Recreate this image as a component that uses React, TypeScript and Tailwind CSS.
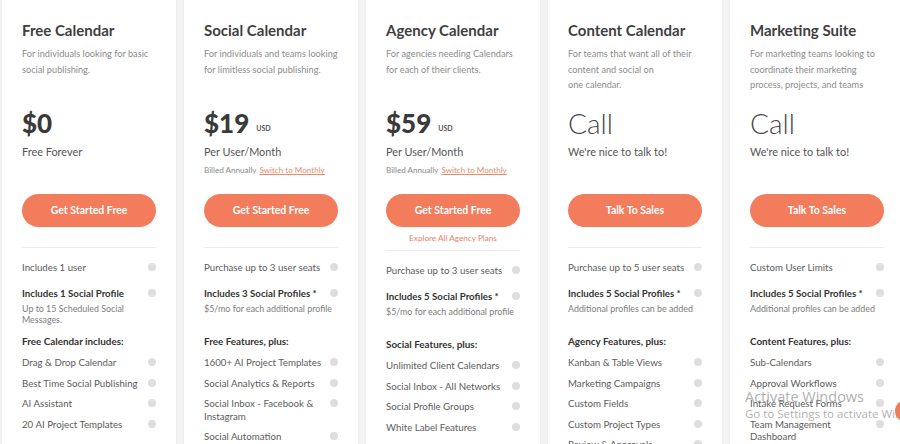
import React from "react";

type Plan = {
  title: string;
  desc: string[];
  price: string;
  isCall?: boolean;
  usd?: boolean;
  sub: string;
  billed?: boolean;
  button: string;
  explore?: boolean;
  first: string;
  profiles: string;
  profilesSub: string;
  header: string;
  features: string[];
};

const plans: Plan[] = [
  {
    title: "Free Calendar",
    desc: ["For individuals looking for basic", "social publishing."],
    price: "$0",
    sub: "Free Forever",
    button: "Get Started Free",
    first: "Includes 1 user",
    profiles: "Includes 1 Social Profile",
    profilesSub: "Up to 15 Scheduled Social Messages.",
    header: "Free Calendar includes:",
    features: ["Drag & Drop Calendar", "Best Time Social Publishing", "AI Assistant", "20 AI Project Templates"],
  },
  {
    title: "Social Calendar",
    desc: ["For individuals and teams looking", "for limitless social publishing."],
    price: "$19",
    usd: true,
    sub: "Per User/Month",
    billed: true,
    button: "Get Started Free",
    first: "Purchase up to 3 user seats",
    profiles: "Includes 3 Social Profiles *",
    profilesSub: "$5/mo for each additional profile",
    header: "Free Features, plus:",
    features: ["1600+ AI Project Templates", "Social Analytics & Reports", "Social Inbox - Facebook & Instagram", "Social Automation"],
  },
  {
    title: "Agency Calendar",
    desc: ["For agencies needing Calendars", "for each of their clients."],
    price: "$59",
    usd: true,
    sub: "Per User/Month",
    billed: true,
    button: "Get Started Free",
    explore: true,
    first: "Purchase up to 3 user seats",
    profiles: "Includes 5 Social Profiles *",
    profilesSub: "$5/mo for each additional profile",
    header: "Social Features, plus:",
    features: ["Unlimited Client Calendars", "Social Inbox - All Networks", "Social Profile Groups", "White Label Features"],
  },
  {
    title: "Content Calendar",
    desc: ["For teams that want all of their", "content and social on", "one calendar."],
    price: "Call",
    isCall: true,
    sub: "We're nice to talk to!",
    button: "Talk To Sales",
    first: "Purchase up to 5 user seats",
    profiles: "Includes 5 Social Profiles *",
    profilesSub: "Additional profiles can be added",
    header: "Agency Features, plus:",
    features: ["Kanban & Table Views", "Marketing Campaigns", "Custom Fields", "Custom Project Types", "Review & Approvals"],
  },
  {
    title: "Marketing Suite",
    desc: ["For marketing teams looking to", "coordinate their marketing", "process, projects, and teams"],
    price: "Call",
    isCall: true,
    sub: "We're nice to talk to!",
    button: "Talk To Sales",
    first: "Custom User Limits",
    profiles: "Includes 5 Social Profiles *",
    profilesSub: "Additional profiles can be added",
    header: "Content Features, plus:",
    features: ["Sub-Calendars", "Approval Workflows", "Intake Request Forms", "Team Management Dashboard"],
  },
];

function Dot() {
  return <span className="mt-[2px] h-[8px] w-[8px] shrink-0 rounded-full bg-[#dedede]" />;
}

function Row({ children, bold }: { children: React.ReactNode; bold?: boolean }) {
  return (
    <div className="flex items-start justify-between">
      <span
        className={`flex-1 pr-[4px] text-[9.7px] leading-[12.5px] ${bold ? "font-bold text-[#333]" : "text-[#5c5c5c]"}`}
      >
        {children}
      </span>
      <Dot />
    </div>
  );
}

function Card({ p }: { p: Plan }) {
  return (
    <div className="flex flex-col bg-white px-5 pt-[20px] shadow-[0_0_2px_rgba(0,0,0,0.06)]">
      <h2 className="whitespace-nowrap text-[15px] font-bold leading-[20px] text-[#3f3f3f]">{p.title}</h2>
      <div className="mt-[6px] h-[48px] text-[9.2px] leading-[15.5px] text-[#8c8c8c]">
        {p.desc.map((d, i) => (
          <div key={i} className="whitespace-nowrap">
            {d}
          </div>
        ))}
      </div>
      <div className="mt-[13px] flex h-[32px] items-end">
        {p.isCall ? (
          <span className="text-[28px] font-light leading-[32px] text-[#474747]">{p.price}</span>
        ) : (
          <span className="text-[26px] font-black leading-[32px] text-[#3a3a3a]">{p.price}</span>
        )}
        {p.usd && <span className="mb-[6px] ml-[7px] text-[7px] font-bold text-[#555]">USD</span>}
      </div>
      <div className="mt-[5px] text-[10.9px] leading-[16px] text-[#555]">{p.sub}</div>
      <div className="mt-[4px] h-[12px] whitespace-nowrap text-[8.1px] leading-[12px] text-[#8a8a8a]">
        {p.billed && (
          <>
            Billed Annually <span className="ml-[1px] text-[#ee8a69] underline">Switch to Monthly</span>
          </>
        )}
      </div>
      <button className="mt-[18px] h-[33px] w-full rounded-full bg-[#f27c5b] text-[10.5px] font-bold text-white">
        {p.button}
      </button>
      {p.explore ? (
        <>
          <div className="mt-[6px] text-center text-[8.2px] leading-[10px] text-[#e4836a]">Explore All Agency Plans</div>
          <div className="mt-[7px] h-px bg-[#ececec]" />
        </>
      ) : (
        <div className="mt-[20px] h-px bg-[#ececec]" />
      )}
      <div className="mt-[13px]">
        <Row>{p.first}</Row>
      </div>
      <div className="mt-[13px]">
        <Row bold>{p.profiles}</Row>
        <div className="mt-[4px] h-[24px] text-[8.9px] leading-[11px] text-[#7d7d7d]">{p.profilesSub}</div>
      </div>
      <div className="mt-[8px] text-[9.9px] font-bold leading-[13px] text-[#333]">{p.header}</div>
      <div className="mt-[8px] flex flex-col gap-[8px]">
        {p.features.map((f) => (
          <Row key={f}>{f}</Row>
        ))}
      </div>
    </div>
  );
}

export default function App() {
  return (
    <div
      className="relative h-[444px] w-[900px] overflow-hidden bg-[#f3f3f3]"
      style={{ fontFamily: "Lato, 'Open Sans', sans-serif" }}
    >
      <div className="ml-[2px] grid h-full grid-cols-[174px_174px_174px_174px_174px] gap-[8px]">
        {plans.map((p) => (
          <Card key={p.title} p={p} />
        ))}
      </div>
      <div
        className="pointer-events-none absolute left-[745px] top-[387px] text-[#9a9a9a]/80"
        style={{ fontFamily: "'Open Sans', sans-serif" }}
      >
        <div className="text-[14.5px] leading-[19px]">Activate Windows</div>
        <div className="whitespace-nowrap text-[11.5px] leading-[15px]">Go to Settings to activate Windows.</div>
      </div>
      <div className="absolute left-[895px] top-[400px] h-[22px] w-[22px] rounded-full bg-[#f07c5a]" />
    </div>
  );
}
